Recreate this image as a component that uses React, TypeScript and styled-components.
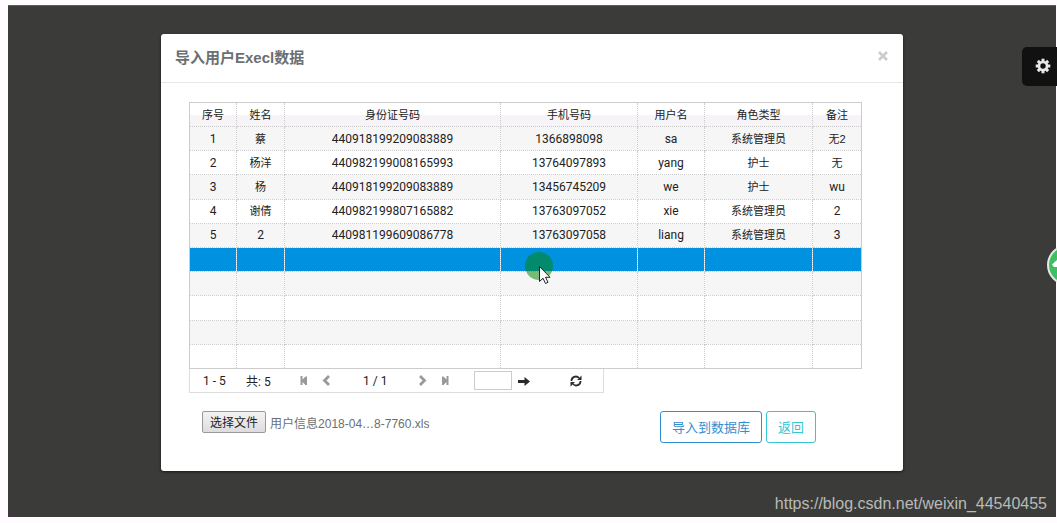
import React from "react";
import styled, { createGlobalStyle, css } from "styled-components";

const Global = createGlobalStyle`
  * { box-sizing: border-box; }
  body {
    margin: 0;
    background: #fffbff;
    font-family: "Liberation Sans", "Noto Sans CJK SC", sans-serif;
    color: #6b6f71;
  }
`;

const Page = styled.div`
  display: flex;
  flex-direction: column;
  min-height: 100vh;
  padding: 5px 1px 6px 8px;
  position: relative;
  overflow: hidden;
`;

const Backdrop = styled.main`
  flex: 1;
  display: flex;
  flex-direction: column;
  align-items: center;
  background: #3b3c39;
  border-top: 1px solid #5c5e5a;
  padding: 28px 0 0;
`;

const Dialog = styled.section`
  width: 70.8%;
  background: #fff;
  border-radius: 3px;
  box-shadow: 0 1px 3px rgba(0, 0, 0, 0.6);
`;

const DialogHeader = styled.header`
  display: flex;
  align-items: center;
  justify-content: space-between;
  height: 49px;
  padding: 0 14px;
  border-bottom: 1px solid #e8e8e8;
`;

const Title = styled.h1`
  margin: 0;
  font-size: 15px;
  line-height: 24px;
  font-weight: 700;
`;

const CloseButton = styled.button`
  display: flex;
  padding: 0 0 4px;
  border: 0;
  background: none;
`;

const DialogBody = styled.div`
  padding: 19px 42px 28px 28px;
`;

const Table = styled.table`
  width: 100%;
  height: 267px;
  table-layout: fixed;
  border-collapse: collapse;
  border: 1px solid #ccc;
  color: #222;
  font-size: 11px;
  line-height: 16px;
`;

const Column = styled.col<{ $width: number }>`
  width: ${(p) => p.$width}px;
`;

const HeadRow = styled.tr`
  height: 24px;
  background: linear-gradient(#fff 0 50%, #f7f4f7 50% 100%);
`;

const HeadCell = styled.th`
  padding: 0;
  font-weight: 400;
  border: 1px dotted #ccc;
`;

const Row = styled.tr<{ $selected?: boolean }>`
  height: 24px;
  &:nth-child(odd) { background: #f6f6f6; }
  ${(p) => p.$selected && css`
    && { background: #0092e0; }
  `}
`;

const Cell = styled.td<{ $latin?: boolean }>`
  position: relative;
  padding: 0;
  text-align: center;
  border: 1px dotted #ccc;
  ${(p) => p.$latin && css`
    font-family: Roboto, "Noto Sans CJK SC", sans-serif;
    font-size: 12px;
  `}
`;

const Pointer = styled.svg`
  position: absolute;
  z-index: 1;
  left: 23px;
  top: 3px;
`;

const Pager = styled.nav`
  display: flex;
  align-items: center;
  width: 415px;
  height: 24px;
  padding-left: 13px;
  border: 1px solid #ddd;
  border-top: 0;
  color: #222;
  font-family: Roboto, "Noto Sans CJK SC", sans-serif;
  font-size: 12px;
`;

const PagerText = styled.span<{ $width: number }>`
  width: ${(p) => p.$width}px;
`;

const PagerButton = styled.button<{ $gap?: number; $dark?: boolean }>`
  display: flex;
  padding: 0;
  border: 0;
  background: none;
  margin-right: ${(p) => p.$gap ?? 0}px;
  color: ${(p) => (p.$dark ? "#2b2b2b" : "#999")};
`;

const PageInput = styled.input`
  width: 38px;
  height: 19px;
  margin-right: 6px;
  padding: 0 4px;
  border: 1px solid #ccc;
  background: #fff;
`;

const Footer = styled.footer`
  display: flex;
  align-items: flex-start;
  justify-content: space-between;
  padding: 18px 45px 0 13px;
`;

const FilePicker = styled.div`
  display: flex;
  align-items: center;
  gap: 4px;
  font-size: 12px;
`;

const FileLabel = styled.label`
  position: relative;
  height: 22px;
  padding: 0 7px;
  border: 1px solid #999;
  border-radius: 2px;
  background: linear-gradient(#f5f2f4, #dedcde);
  color: #222;
  line-height: 22px;
`;

const FileInput = styled.input`
  position: absolute;
  inset: 0;
  width: 100%;
  opacity: 0;
`;

const Actions = styled.div`
  display: flex;
  gap: 4px;
`;

const ActionButton = styled.button<{ $color: string }>`
  height: 32px;
  padding: 0 11px 2px;
  border: 1px solid ${(p) => p.$color};
  border-radius: 3px;
  background: #fff;
  color: ${(p) => p.$color};
  font-family: inherit;
  font-size: 13px;
`;

const SettingsTab = styled.button`
  position: absolute;
  top: 47px;
  right: 0;
  display: flex;
  align-items: center;
  width: 35px;
  height: 39px;
  padding: 0 0 2px 13px;
  border: 0;
  border-radius: 5px 0 0 5px;
  background: #111;
`;

const FloatingBadge = styled.svg`
  position: absolute;
  right: 0;
  top: 244px;
`;

const Watermark = styled.span`
  position: absolute;
  right: 10px;
  bottom: 9px;
  color: #b9bab8;
  font-size: 16px;
  line-height: 20px;
`;

const columns = [
  { label: "序号", width: 47 },
  { label: "姓名", width: 48 },
  { label: "身份证号码", width: 216 },
  { label: "手机号码", width: 137 },
  { label: "用户名", width: 67 },
  { label: "角色类型", width: 108 },
  { label: "备注", width: 49 },
];

const records = [
  ["1", "蔡", "440918199209083889", "1366898098", "sa", "系统管理员", "无2"],
  ["2", "杨洋", "440982199008165993", "13764097893", "yang", "护士", "无"],
  ["3", "杨", "440918199209083889", "13456745209", "we", "护士", "wu"],
  ["4", "谢倩", "440982199807165882", "13763097052", "xie", "系统管理员", "2"],
  ["5", "2", "440981199609086778", "13763097058", "liang", "系统管理员", "3"],
];

const SELECTED_ROW = 5;
const rows = Array.from({ length: 10 }, (_, i) => records[i] ?? columns.map(() => ""));

const isLatin = (text: string) => /^[\w]+$/.test(text);

const MousePointer = () => (
  <Pointer width="30" height="36" viewBox="0 0 30 36" aria-hidden="true">
    <circle cx="15" cy="15" r="14" fill="#048204" fillOpacity=".52" />
    <path d="M15.500 15.500v15l3.500-3.300 2.500 5.300 2.500-1.200-2.500-5h4.500z" fill="#fff" stroke="#222" />
  </Pointer>
);

const StepIcon = ({ edge, flip }: { edge?: boolean; flip?: boolean }) => (
  <svg width="9" height="11" viewBox="0 0 9 11" aria-hidden="true">
    <g transform={flip ? "matrix(-1 0 0 1 9 0)" : undefined}>
      {edge ? (
        <path d="M1.500 1h2v3.500L6.500 1.500H8v8.500H6.500L3.500 7V10h-2z" fill="currentColor" />
      ) : (
        <path d="M7 1 2.500 5.500 7 10" fill="none" stroke="currentColor" strokeWidth="2.800" />
      )}
    </g>
  </svg>
);

export default function App() {
  return (
    <>
      <Global />
      <Page>
        <Backdrop>
          <Dialog role="dialog" aria-labelledby="dialog-title">
            <DialogHeader>
              <Title id="dialog-title">导入用户Execl数据</Title>
              <CloseButton aria-label="关闭">
                <svg width="12" height="12" viewBox="0 0 12 12">
                  <path d="m2 2 8 8M10 2 2 10" stroke="#ccc" strokeWidth="2.600" />
                </svg>
              </CloseButton>
            </DialogHeader>
            <DialogBody>
              <Table>
                <colgroup>
                  {columns.map((c) => <Column key={c.label} $width={c.width} />)}
                </colgroup>
                <thead>
                  <HeadRow>
                    {columns.map((c) => <HeadCell key={c.label} scope="col">{c.label}</HeadCell>)}
                  </HeadRow>
                </thead>
                <tbody>
                  {rows.map((row, r) => (
                    <Row key={r} $selected={r === SELECTED_ROW}>
                      {row.map((text, c) => (
                        <Cell key={c} $latin={isLatin(text)}>
                          {text}
                          {r === SELECTED_ROW && c === 3 && <MousePointer />}
                        </Cell>
                      ))}
                    </Row>
                  ))}
                </tbody>
              </Table>
              <Pager aria-label="分页">
                <PagerText $width={43}>1 - 5</PagerText>
                <PagerText $width={53}>共: 5</PagerText>
                <PagerButton aria-label="首页" $gap={14}><StepIcon edge /></PagerButton>
                <PagerButton aria-label="上一页" $gap={32}><StepIcon /></PagerButton>
                <PagerText $width={55}>1 / 1</PagerText>
                <PagerButton aria-label="下一页" $gap={14}><StepIcon flip /></PagerButton>
                <PagerButton aria-label="末页" $gap={24}><StepIcon edge flip /></PagerButton>
                <PageInput aria-label="页码" />
                <PagerButton aria-label="跳转" $gap={40} $dark>
                  <svg width="12" height="10" viewBox="0 0 12 10">
                    <path d="M0 4h6.500V1L12 5.500 6.500 10V7H0z" fill="currentColor" />
                  </svg>
                </PagerButton>
                <PagerButton aria-label="刷新" $dark>
                  <svg width="12" height="12" viewBox="0 0 12 12">
                    <path d="M1.500 6A4.300 4.300 0 0 1 9 3M10.500 6A4.300 4.300 0 0 1 3 9" fill="none" stroke="currentColor" strokeWidth="1.800" />
                    <path d="M11.500.500V5H7zM.500 11.500V7H5z" fill="currentColor" />
                  </svg>
                </PagerButton>
              </Pager>
              <Footer>
                <FilePicker>
                  <FileLabel>
                    选择文件
                    <FileInput type="file" />
                  </FileLabel>
                  <span>用户信息2018-04…8-7760.xls</span>
                </FilePicker>
                <Actions>
                  <ActionButton $color="#3390d0">导入到数据库</ActionButton>
                  <ActionButton $color="#36c6d3">返回</ActionButton>
                </Actions>
              </Footer>
            </DialogBody>
          </Dialog>
        </Backdrop>
        <SettingsTab aria-label="设置">
          <svg width="16" height="16" viewBox="-8 -8 16 16">
            {[0, 45, 90, 135].map((a) => (
              <rect key={a} x="-1.500" y="-7.300" width="3" height="14.600" fill="#e8e8e8" transform={`rotate(${a})`} />
            ))}
            <circle r="5.300" fill="#e8e8e8" />
            <circle r="2.700" fill="#111" />
          </svg>
        </SettingsTab>
        <FloatingBadge width="10" height="42" viewBox="0 0 10 42" aria-hidden="true">
          <circle cx="20" cy="21" r="19" fill="#3fbf63" stroke="#e6e8e6" strokeWidth="2" />
          <path d="M5 20.500 10 16v7H7z" fill="#fff" />
        </FloatingBadge>
        <Watermark>https://blog.csdn.net/weixin_44540455</Watermark>
      </Page>
    </>
  );
}
